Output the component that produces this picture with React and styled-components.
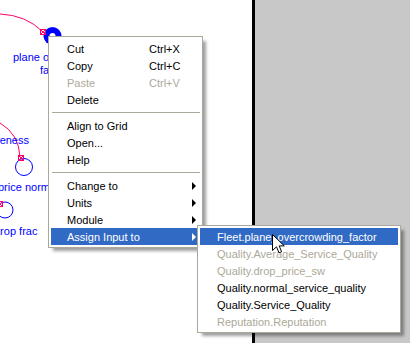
import styled, { createGlobalStyle } from "styled-components";

const GlobalStyle = createGlobalStyle`
  html, body {
    margin: 0;
    padding: 0;
  }
  body {
    font-family: "Liberation Sans", Arial, sans-serif;
    font-size: 11px;
  }
`;

const Screen = styled.div`
  position: relative;
  display: flex;
  width: 410px;
  height: 343px;
  overflow: hidden;
`;

const Canvas = styled.div`
  position: relative;
  width: 252px;
  background: #fff;
`;

const Divider = styled.div`
  width: 3px;
  background: #000;
`;

const Side = styled.div`
  flex: 1;
  background: #c8c8c8;
`;

const Diagram = styled.svg`
  position: absolute;
  left: 0;
  top: 0;
  text {
    font-family: "Liberation Sans", Arial, sans-serif;
    font-size: 11px;
    fill: #0000ff;
  }
`;

const Menu = styled.div`
  position: absolute;
  left: ${(p) => p.$x}px;
  top: ${(p) => p.$y}px;
  width: ${(p) => p.$w}px;
  box-sizing: border-box;
  background: #fff;
  border: 1px solid #aca899;
  padding: 2px;
  padding-top: ${(p) => p.$padTop}px;
  box-shadow: 4px 4px 3px -1px rgba(0, 0, 0, 0.38);
  z-index: ${(p) => p.$z};
`;

const Item = styled.div`
  display: flex;
  align-items: center;
  height: 17px;
  padding-left: ${(p) => p.$indent}px;
  white-space: nowrap;
  color: ${(p) => (p.$active ? "#fff" : p.$disabled ? "#aca899" : "#000")};
  background: ${(p) => (p.$active ? "#316ac5" : "transparent")};
`;

const Label = styled.span`
  width: ${(p) => (p.$fixed ? "82px" : "auto")};
  flex: ${(p) => (p.$fixed ? "none" : "1")};
`;

const Shortcut = styled.span`
  flex: 1;
`;

const Arrow = styled.span`
  width: 0;
  height: 0;
  margin-right: 4px;
  border-left: 4px solid currentColor;
  border-top: 4px solid transparent;
  border-bottom: 4px solid transparent;
`;

const Separator = styled.div`
  height: 1px;
  margin: 4px 0 4px 1px;
  background: #aca899;
`;

const Pointer = styled.svg`
  position: absolute;
  left: 272px;
  top: 234px;
  z-index: 5;
`;

const mainItems = [
  { label: "Cut", key: "Ctrl+X" },
  { label: "Copy", key: "Ctrl+C" },
  { label: "Paste", key: "Ctrl+V", disabled: true },
  { label: "Delete" },
  "sep",
  { label: "Align to Grid" },
  { label: "Open..." },
  { label: "Help" },
  "sep",
  { label: "Change to", sub: true },
  { label: "Units", sub: true },
  { label: "Module", sub: true },
  { label: "Assign Input to", sub: true, active: true },
];

const subItems = [
  { label: "Fleet.plane_overcrowding_factor", active: true },
  { label: "Quality.Average_Service_Quality", disabled: true },
  { label: "Quality.drop_price_sw", disabled: true },
  { label: "Quality.normal_service_quality" },
  { label: "Quality.Service_Quality" },
  { label: "Reputation.Reputation", disabled: true },
];

const PinkMark = ({ x, y }) => (
  <g stroke="#ff0066" fill="none" strokeWidth="1">
    <rect x={x - 2.5} y={y - 2.5} width="5" height="5" />
    <path d={`M${x - 2} ${y - 2}L${x + 2} ${y + 2}M${x + 2} ${y - 2}L${x - 2} ${y + 2}`} />
  </g>
);

const App = () => {
  return (
    <>
      <GlobalStyle />
      <Screen>
        <Canvas>
          <Diagram width="252" height="343">
            <path d="M0 14 Q 26 15 43 32" stroke="#ff0066" fill="none" />
            <path d="M0 123 Q 19 134 20 157" stroke="#ff0066" fill="none" />
            <circle cx="52.5" cy="36" r="9" fill="#0000ff" />
            <circle cx="52.5" cy="36" r="3" fill="#fff" />
            <PinkMark x={43} y={32} />
            <text x="13" y="61">plane ov</text>
            <text x="40" y="74">fa</text>
            <text x="29" y="144" textAnchor="end">effectiveness</text>
            <circle cx="24" cy="167" r="8.5" stroke="#0000ff" fill="none" />
            <PinkMark x={21} y={158} />
            <text x="-2" y="191">price normal</text>
            <circle cx="5" cy="210" r="8" stroke="#0000ff" fill="none" />
            <PinkMark x={0} y={204} />
            <text x="-6" y="235">drop frac</text>
          </Diagram>
        </Canvas>
        <Divider />
        <Side />

        <Menu $x={48} $y={36} $w={155} $padTop={3} $z={2}>
          {mainItems.map((it, i) =>
            it === "sep" ? (
              <Separator key={i} />
            ) : (
              <Item key={i} $indent={16} $active={it.active} $disabled={it.disabled}>
                <Label $fixed>{it.label}</Label>
                <Shortcut>{it.key}</Shortcut>
                {it.sub && <Arrow />}
              </Item>
            )
          )}
        </Menu>

        <Menu $x={197} $y={225} $w={204} $padTop={2} $z={3}>
          {subItems.map((it, i) => (
            <Item key={i} $indent={17} $active={it.active} $disabled={it.disabled}>
              <Label>{it.label}</Label>
            </Item>
          ))}
        </Menu>

        <Pointer width="14" height="21" viewBox="0 0 14 21">
          <path
            d="M0.5 0.5 L0.5 16.5 L4.5 12.8 L7 18.8 L9.6 17.7 L7.2 11.9 L12.3 11.9 Z"
            fill="#fff"
            stroke="#000"
            strokeWidth="1"
          />
        </Pointer>
      </Screen>
    </>
  );
};

export default App;
